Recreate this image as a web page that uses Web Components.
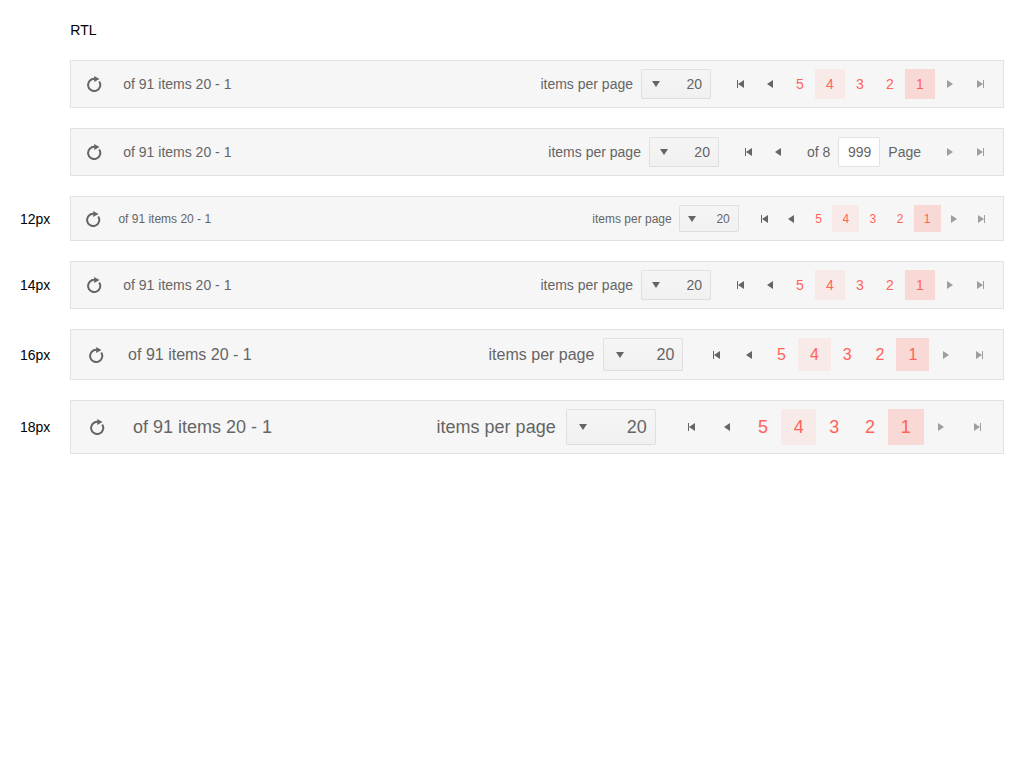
<!DOCTYPE html>
<html lang="en">
<head>
<meta charset="utf-8">
<title>Pager RTL</title>
<style>
body{margin:0;padding:20px;font:14px/20px "Liberation Sans",Arial,sans-serif;color:#000;background:#fff}
</style>
</head>
<body>
<demo-page>
  <demo-row><data-pager></data-pager></demo-row>
  <demo-row><data-pager mode="input"></data-pager></demo-row>
  <demo-row label="12px"><data-pager size="12"></data-pager></demo-row>
  <demo-row label="14px"><data-pager size="14"></data-pager></demo-row>
  <demo-row label="16px"><data-pager size="16"></data-pager></demo-row>
  <demo-row label="18px"><data-pager size="18"></data-pager></demo-row>
</demo-page>
<script>
const ICONS = {
  refresh: '<path d="M8.8 2.9A6.1 6.1 0 1 0 13.2 5.5" fill="none" stroke="currentColor" stroke-width="2"/><path d="M8.2 0l5.3 2.9-5.3 3.1z"/>',
  first: '<path d="M5 4h1v8H5zM12 4v8L6 8z"/>',
  prev: '<path d="M11 4v8L5 8z"/>',
  next: '<path d="M5 4v8l6-4z"/>',
  last: '<path d="M5 4v8l6-4zM11 4h1v8h-1z"/>',
  down: '<path d="M4 5h8l-4 6z"/>'
};

const TEXT_DROP = {12: 1, 14: 0, 16: 1, 18: 2};
const ICON_SHIFT = {12: 0, 14: 0, 16: .15, 18: -.25};

class PagerIcon extends HTMLElement {
  connectedCallback() {
    this.attachShadow({mode: 'open'}).innerHTML = `
      <style>
        :host{display:block;flex:none;width:16px;height:16px;
          margin-left:var(--icon-shift,0px);margin-right:calc(-1 * var(--icon-shift,0px))}
        svg{display:block}
      </style>
      <svg width="16" height="16" viewBox="0 0 16 16" fill="currentColor">${ICONS[this.getAttribute('name')]}</svg>`;
  }
}

class PagerItem extends HTMLElement {
  connectedCallback() {
    this.attachShadow({mode: 'open'}).innerHTML = `
      <style>
        :host{display:flex;flex:none;box-sizing:border-box;align-items:center;justify-content:center;
          width:calc(10px + 1.4285714286em);height:calc(10px + 1.4285714286em)}
        :host([page]){color:#ff6358;padding-top:var(--text-drop,0px)}
        :host([hovered]){background:#f7eae8}
        :host([selected]){background:#f9d9d5}
        :host([disabled]){opacity:.6}
      </style><slot></slot>`;
  }
}

class PagerSelect extends HTMLElement {
  connectedCallback() {
    this.attachShadow({mode: 'open'}).innerHTML = `
      <style>
        :host{display:flex;box-sizing:border-box;align-items:center;justify-content:space-between;
          width:5em;height:calc(10px + 1.4285714286em);padding-right:8px;
          border:1px solid rgba(0,0,0,.08);border-radius:2px;
          background:#f5f5f5 linear-gradient(rgba(0,0,0,0),rgba(0,0,0,.02)) border-box}
        .arrow{display:flex;justify-content:center;width:calc(8px + 1.4285714286em)}
        .value{padding-top:var(--text-drop,0px)}
      </style>
      <span class="arrow"><pager-icon name="down"></pager-icon></span><span class="value"><slot></slot></span>`;
  }
}

class PagerInput extends HTMLElement {
  connectedCallback() {
    this.attachShadow({mode: 'open'}).innerHTML = `
      <style>
        :host{display:flex;box-sizing:border-box;align-items:center;justify-content:flex-end;
          width:3em;height:calc(10px + 1.4285714286em);padding-right:8px;
          border:1px solid #e2e2e2;border-radius:2px;background:#fff}
      </style><slot></slot>`;
  }
}

class DataPager extends HTMLElement {
  connectedCallback() {
    const size = Number(this.getAttribute('size')) || 14;
    const pages = this.getAttribute('mode') === 'input'
      ? '<div class="goto"><span>of 8</span><pager-input>999</pager-input><span>Page</span></div>'
      : `<pager-item page>5</pager-item><pager-item page hovered>4</pager-item><pager-item page>3</pager-item>
         <pager-item page>2</pager-item><pager-item page selected>1</pager-item>`;
    this.attachShadow({mode: 'open'}).innerHTML = `
      <style>
        :host{display:flex;box-sizing:border-box;align-items:center;
          height:calc(28px + 1.4285714286em);padding:8px;
          --text-drop:${TEXT_DROP[size]}px;--icon-shift:${ICON_SHIFT[size]}px;
          font-size:${size}px;line-height:1.4285714286;
          color:#656565;background:#f6f6f6;border:1px solid #e2e2e2;white-space:nowrap}
        .info{flex:1;margin-left:calc(1em + .25px);padding-top:var(--text-drop)}
        .sizes{display:flex;align-items:center;gap:calc(.5em + 1px);margin-right:1em}
        .caption{padding-top:var(--text-drop)}
        .nav{display:flex}
        .goto{display:flex;align-items:center;gap:8px;margin:0 1em}
      </style>
      <pager-item><pager-icon name="refresh"></pager-icon></pager-item>
      <div class="info">of 91 items 20 - 1</div>
      <div class="sizes"><span class="caption">items per page</span><pager-select>20</pager-select></div>
      <div class="nav">
        <pager-item><pager-icon name="first"></pager-icon></pager-item>
        <pager-item><pager-icon name="prev"></pager-icon></pager-item>
        ${pages}
        <pager-item disabled><pager-icon name="next"></pager-icon></pager-item>
        <pager-item disabled><pager-icon name="last"></pager-icon></pager-item>
      </div>`;
  }
}

class DemoRow extends HTMLElement {
  connectedCallback() {
    this.attachShadow({mode: 'open'}).innerHTML = `
      <style>:host{display:grid;grid-template-columns:50px 1fr;align-items:center}</style>
      <span>${this.getAttribute('label') || ''}</span><slot></slot>`;
  }
}

class DemoPage extends HTMLElement {
  connectedCallback() {
    this.attachShadow({mode: 'open'}).innerHTML = `
      <style>:host{display:flex;flex-direction:column;gap:20px}.title{padding-left:50.3px}</style>
      <div class="title">RTL</div><slot></slot>`;
  }
}

customElements.define('pager-icon', PagerIcon);
customElements.define('pager-item', PagerItem);
customElements.define('pager-select', PagerSelect);
customElements.define('pager-input', PagerInput);
customElements.define('data-pager', DataPager);
customElements.define('demo-row', DemoRow);
customElements.define('demo-page', DemoPage);
</script>
</body>
</html>
